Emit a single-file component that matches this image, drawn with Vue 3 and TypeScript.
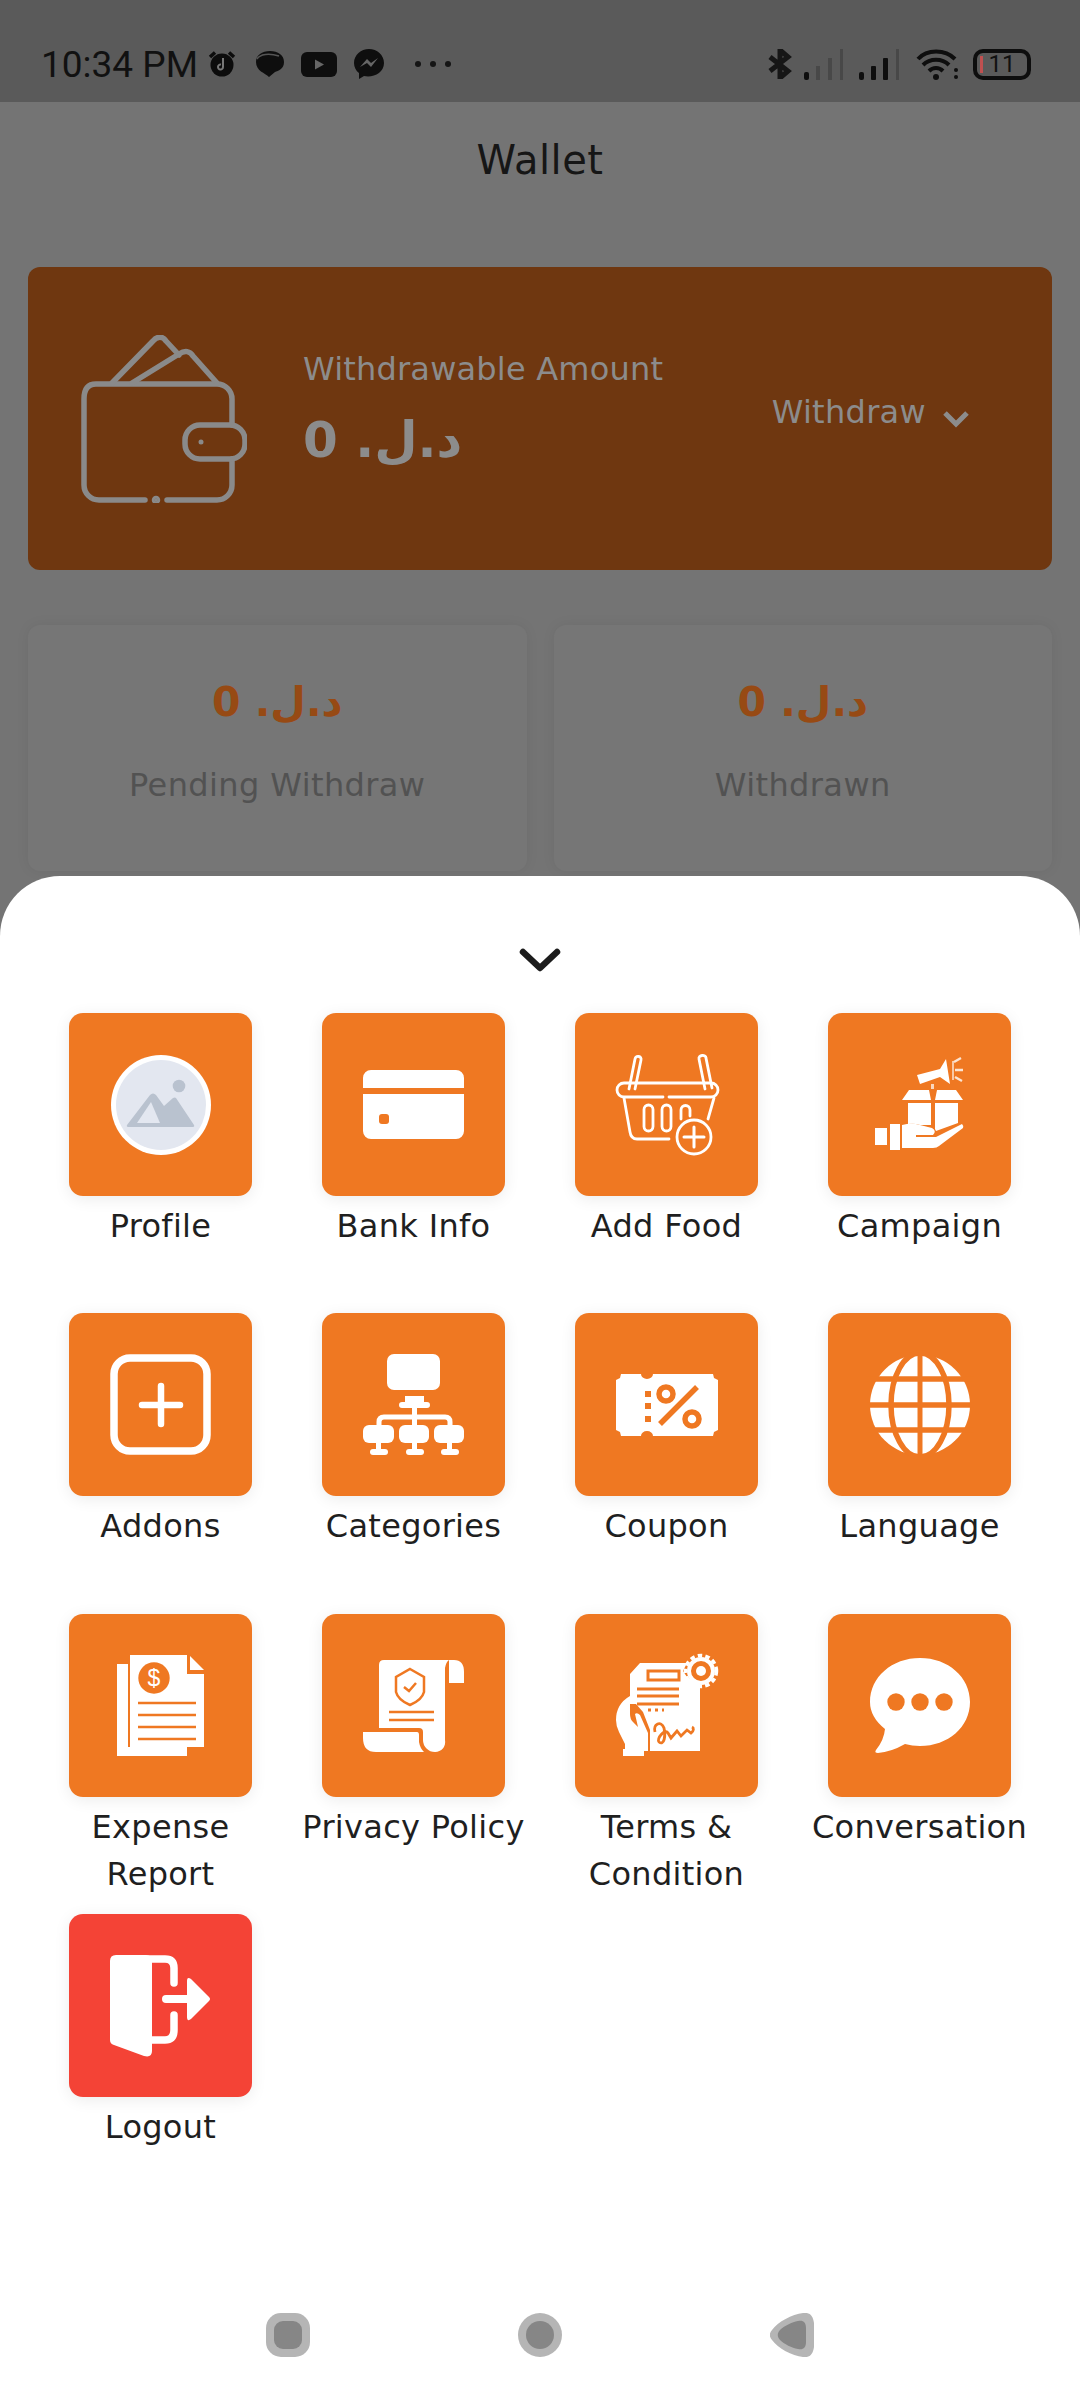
<script setup lang="ts">
interface Item { label: string; icon: string; red?: boolean }
const items: Item[] = [
  { label: 'Profile', icon: 'profile' },
  { label: 'Bank Info', icon: 'bank' },
  { label: 'Add Food', icon: 'food' },
  { label: 'Campaign', icon: 'campaign' },
  { label: 'Addons', icon: 'addons' },
  { label: 'Categories', icon: 'categories' },
  { label: 'Coupon', icon: 'coupon' },
  { label: 'Language', icon: 'language' },
  { label: 'Expense Report', icon: 'expense' },
  { label: 'Privacy Policy', icon: 'privacy' },
  { label: 'Terms & Condition', icon: 'terms' },
  { label: 'Conversation', icon: 'conversation' },
  { label: 'Logout', icon: 'logout', red: true },
]
const amount = 'د.ل. 0'
</script>

<template>
  <div class="screen">
    <header class="status">
      <span class="time">10:34 PM</span>
      <svg class="s-alarm" width="28" height="26" viewBox="0 0 28 26"><circle cx="14" cy="14" r="11.5" fill="#0c0c0c"/><path d="M2 6 7 1.5M26 6 21 1.5" stroke="#0c0c0c" stroke-width="3.5"/><path d="M15 7v9a2.5 2.5 0 1 1-2-2.4" stroke="#777" stroke-width="2" fill="none"/></svg>
      <svg class="s-chat" width="29" height="26" viewBox="0 0 29 26"><path d="M14 26C10 22 1 20 1 11 1 4 7 0 15 0s14 4 14 11-6 9-9 10z" fill="#0e0e0e"/><path d="M2 8C5 3 14 2 24 5" stroke="#555" stroke-width="1.5" fill="none"/></svg>
      <svg class="s-yt" width="36" height="25" viewBox="0 0 36 25"><rect width="36" height="25" rx="6" fill="#0e0e0e"/><path d="M14 7.5 23 12.5 14 17.5z" fill="#666"/></svg>
      <svg class="s-ms" width="30" height="30" viewBox="0 0 30 30"><path d="M15 0C7 0 0 6 0 14c0 4 2 8 5 10v6l5-3c9 2 20-3 20-13C30 6 23 0 15 0z" fill="#0e0e0e"/><path d="M6 18 13 10l4 4 7-5-7 9-4-4z" fill="#666"/></svg>
      <span class="dots"><i></i><i></i><i></i></span>
      <svg class="s-bt" width="24" height="30" viewBox="0 0 24 30"><path d="M2 8 20 22 12 29V1l8 7L2 22" stroke="#161616" stroke-width="5" fill="none"/></svg>
      <svg class="s-sig1" width="41" height="31" viewBox="0 0 41 31"><rect x="0" y="23" width="5" height="8" rx="2" fill="#0e0e0e"/><rect x="12" y="17" width="4" height="14" fill="#484848"/><rect x="24" y="9" width="4" height="22" fill="#484848"/><rect x="36" y="0" width="3" height="31" fill="#484848"/></svg>
      <svg class="s-sig2" width="41" height="31" viewBox="0 0 41 31"><rect x="0" y="23" width="5" height="8" rx="2" fill="#0e0e0e"/><rect x="12" y="17" width="5" height="14" rx="1" fill="#0e0e0e"/><rect x="24" y="9" width="5" height="22" rx="1" fill="#0e0e0e"/><rect x="37" y="0" width="3" height="31" fill="#484848"/></svg>
      <svg class="s-wifi" width="43" height="31" viewBox="0 0 43 31"><g fill="none" stroke="#0e0e0e" stroke-width="4"><path d="M2 10C11 0 29 0 39 10"/><path d="M7 16C14 9 26 9 33 16"/><path d="M13 22C17 18 23 18 27 22"/></g><circle cx="20" cy="28" r="3" fill="#0e0e0e"/><circle cx="40" cy="28" r="2" fill="#0e0e0e"/><circle cx="40" cy="21" r="2" fill="#0e0e0e"/></svg>
      <span class="battery"><i class="low"></i><b>11</b></span>
    </header>

    <div class="appbar">Wallet</div>

    <section class="wallet">
      <svg class="wallet-icon" width="166" height="168" viewBox="0 0 166 168" fill="none" stroke="#8a8a8a" stroke-width="5.500" stroke-linecap="round" stroke-linejoin="round">
        <path d="M86 165H136a15 15 0 0 0 15-15V124M151 90V64a15 15 0 0 0-15-15H15Q3 49 3 64V150a15 15 0 0 0 15 15H64"/>
        <path d="M31 48 72 6c4-5 10-5 13 0l13 14M51 48 98 19c6-4 11-3 14 2l24 27"/>
        <rect x="104" y="90" width="60" height="34" rx="15"/>
        <circle cx="120" cy="107" r="2.500" fill="#8a8a8a" stroke="none"/>
        <circle cx="75" cy="165" r="1.500" fill="#8a8a8a"/>
      </svg>
      <div class="wallet-text">
        <div class="wallet-label">Withdrawable Amount</div>
        <div class="wallet-amount">{{ amount }}</div>
      </div>
      <div class="withdraw">
        <span>Withdraw</span>
        <svg class="withdraw-chev" width="28" height="18" viewBox="0 0 28 18"><path d="M3 3 14 14 25 3" fill="none" stroke="#8c8c8c" stroke-width="5"/></svg>
      </div>
    </section>

    <section class="stats">
      <div class="stat"><div class="stat-amount">{{ amount }}</div><div class="stat-label">Pending Withdraw</div></div>
      <div class="stat"><div class="stat-amount">{{ amount }}</div><div class="stat-label">Withdrawn</div></div>
    </section>

    <section class="sheet">
      <svg class="collapse" width="42" height="26" viewBox="0 0 42 26"><path d="M4 5 21 21 38 5" fill="none" stroke="#1c1c1c" stroke-width="6.500" stroke-linecap="round" stroke-linejoin="round"/></svg>
      <div class="grid">
        <div v-for="item in items" :key="item.label" class="cell">
          <div class="tile" :class="{ red: item.red }">
            <svg width="183" height="183" viewBox="0 0 183 183">
              <g v-if="item.icon === 'profile'">
                <circle cx="92" cy="92" r="50" fill="#fff"/><circle cx="92" cy="92" r="45" fill="#e3e7f0"/><circle cx="110" cy="73" r="6.300" fill="#b9c2cf"/>
                <path d="M58 112 81 82q3-3 6 0l8 11 9-8q2-1 3 0l18 27q1 2-2 2H60q-3 0-2-2z" fill="#b9c2cf"/><path d="M68 110 82 89 91 110z" fill="#e3e7f0"/>
              </g>
              <g v-else-if="item.icon === 'bank'">
                <path d="M41 75V65a8 8 0 0 1 8-8h85a8 8 0 0 1 8 8v10zM41 81h101v37a8 8 0 0 1-8 8H49a8 8 0 0 1-8-8z" fill="#fff"/><rect x="57" y="101" width="10" height="10" rx="3" fill="#ef7822"/>
              </g>
              <g v-else-if="item.icon === 'food'" fill="none" stroke="#fff" stroke-width="2.800" stroke-linecap="round">
                <path d="M88 84H49a6.500 6.500 0 0 1 0-14H136a6.500 6.500 0 0 1 0 14H94"/>
                <path d="M54 76 60 46c1-4 7-3 6 1L60 76M124 46c-1-4 7-5 7-1l6 30M124 46l6 30"/>
                <path d="M49 85 55 119q1 7 7 7H94M139 85 133 106"/>
                <rect x="69" y="92" width="9" height="26" rx="4.500"/><rect x="87" y="92" width="9" height="26" rx="4.500"/><path d="M106 106V97a4.500 4.500 0 0 1 9 0v6"/>
                <circle cx="119" cy="124" r="17"/><path d="M109 124H129M119 114V134" stroke-width="3"/>
              </g>
              <g v-else-if="item.icon === 'campaign'" fill="#fff">
                <path d="M89 62 112 56 118 46 122 71 112 64 92 71z"/><path d="M124 48h2v19h-2z" opacity=".6"/><path d="M126 49l7-4M127 57h8M127 64l7 4" stroke="#fff" stroke-width="2.400" opacity=".8"/>
                <path d="M103 71h3v5h-3z" opacity=".7"/>
                <path d="M74 87 81 77H101L103 87zM107 87 109 77H128L135 87z"/>
                <path d="M80 90H103V112H92q-6-2-12-1zM107 90H130V110L108 118 107 116z"/>
                <rect x="47" y="115" width="12" height="17"/>
                <rect x="62" y="111" width="10" height="26"/>
                <path d="M74 112q10-3 18 0l12 3q5 3 1 7H88v2h20l26-13q2 2 1 4l-24 18q-2 2-6 2H74z"/>
              </g>
              <g v-else-if="item.icon === 'addons'" fill="none" stroke="#fff" stroke-linecap="round">
                <rect x="45" y="45" width="93" height="93" rx="16" stroke-width="7.500"/><path d="M73 92H111M92 73V111" stroke-width="6.500"/>
              </g>
              <g v-else-if="item.icon === 'categories'">
                <rect x="65" y="41" width="53" height="36" rx="7" fill="#fff"/>
                <path d="M83 83H102V89H83zM77 92a3 3 0 0 1 3-3h25a3 3 0 0 1 0 6H80a3 3 0 0 1-3-3z" fill="#fff"/>
                <path d="M92.500 95V112M57 112V109q0-5 5-5h61q5 0 5 5v3" fill="none" stroke="#fff" stroke-width="5"/>
                <g fill="#fff"><rect x="41" y="112" width="31" height="18" rx="6"/><rect x="77" y="112" width="30" height="18" rx="6"/><rect x="112" y="112" width="30" height="18" rx="6"/>
                <rect x="54" y="130" width="5" height="8"/><rect x="90" y="130" width="5" height="8"/><rect x="125" y="130" width="5" height="8"/>
                <rect x="48" y="136" width="18" height="6" rx="3"/><rect x="84" y="136" width="18" height="6" rx="3"/><rect x="119" y="136" width="18" height="6" rx="3"/></g>
              </g>
              <g v-else-if="item.icon === 'coupon'">
                <path d="M46 61H66a6 5 0 0 0 12 0H138l1 4 4 2V117l-4 2-1 4H78a6 5 0 0 0-12 0H46l-1-4-4-2V67l4-2z" fill="#fff"/>
                <g fill="#ef7822"><rect x="70" y="78" width="6" height="6"/><rect x="70" y="90" width="6" height="6"/><rect x="70" y="103" width="6" height="6"/></g>
                <g fill="none" stroke="#ef7822" stroke-width="5.500"><circle cx="91" cy="81" r="7"/><circle cx="117" cy="106" r="7"/><path d="M122 74 85 111"/></g>
              </g>
              <g v-else-if="item.icon === 'language'">
                <circle cx="92" cy="92" r="50" fill="#fff"/>
                <g fill="none" stroke="#ef7822"><ellipse cx="92" cy="92" rx="29" ry="52" stroke-width="5.500"/><path d="M92 38V146" stroke-width="5"/><path d="M38 92H146M38 66H146M38 117H146" stroke-width="5.500"/></g>
              </g>
              <g v-else-if="item.icon === 'expense'">
                <path d="M48 50H59V133H118V142H48z" fill="#fff"/>
                <path d="M61 41H118V60H135V133H61z" fill="#fff"/><path d="M121 42 135 56H121z" fill="#fff"/>
                <circle cx="85" cy="64" r="15.700" fill="#ef7822"/>
                <text x="85" y="72" fill="#fff" font-family="'Liberation Sans', sans-serif" font-size="23" text-anchor="middle">$</text>
                <path d="M69 89H127M69 101H127M69 113H127M69 125H127" stroke="#ef7822" stroke-width="2.400"/>
              </g>
              <g v-else-if="item.icon === 'privacy'">
                <path d="M62 46H127q-3 2-4 8V126a10 10 0 0 1-10 12 12 12 0 0 1-12-12V118q0-4-4-4H57V51q0-5 5-5z" fill="#fff"/>
                <path d="M127 46h5q10 0 10 12V69H127z" fill="#fff"/>
                <path d="M41 118H95q2 0 2 3V128q1 6 5 10H54q-13 0-13-14z" fill="#fff"/>
                <path d="M88 55 102 63V78Q100 86 88 91 76 86 74 78V63z" fill="none" stroke="#ef7822" stroke-width="2.500"/>
                <path d="M82 73 87 77 94 69" fill="none" stroke="#ef7822" stroke-width="2.500"/>
                <path d="M67 98H112M67 106H112" stroke="#ef7822" stroke-width="2.400"/>
              </g>
              <g v-else-if="item.icon === 'terms'">
                <path d="M65 49H112L108 57l4 6 6 4h7v70H75V116L68 98l-7-8H55V60z" fill="#fff"/>
                <path d="M73 57H104V66H73z" fill="none" stroke="#ef7822" stroke-width="3"/>
                <path d="M62 75H104M62 82H104M62 90H104" fill="none" stroke="#ef7822" stroke-width="3"/>
                <path d="M73 96H89" stroke="#ef7822" stroke-width="3" stroke-dasharray="3 4"/>
                <path d="M80 118c-2-8 6-12 9-4 2 8 0 18-5 14-3-3 6-14 9-9l3 5 6-7 4 5 6-6 4 3c3-2 3-5 1-6" fill="none" stroke="#ef7822" stroke-width="2.800"/>
                <path d="M55 82V100q0 5 3 8l5 5-3-13q2-2 5 1l8 18v18H50v-7L44 118q-3-6-3-12 0-16 14-24z" fill="#fff"/>
                <rect x="48" y="135" width="21" height="7" fill="#fff"/>
                <g fill="none" stroke="#fff"><circle cx="126" cy="57" r="12" stroke-width="4"/><circle cx="126" cy="57" r="15.500" stroke-width="3.500" stroke-dasharray="4.500 3.200"/></g><circle cx="126" cy="57" r="5" fill="#fff"/>
              </g>
              <g v-else-if="item.icon === 'conversation'">
                <path d="M92 44c28 0 50 19 50 44s-22 44-50 44q-8 0-15-2-14 8-27 9-4 0-2-3 8-10 9-21-15-12-15-27c0-25 22-44 50-44z" fill="#fff"/>
                <circle cx="68" cy="88" r="8.700" fill="#ef7822"/><circle cx="92" cy="88" r="8.700" fill="#ef7822"/><circle cx="116" cy="88" r="8.700" fill="#ef7822"/>
              </g>
              <g v-else>
                <path d="M47 41H77q6 0 6 6V137q0 7-8 5L45 131q-4-1-4-5V47q0-6 6-6z" fill="#fff"/>
                <path d="M78 45H96q9 0 9 9V69M105 101V116q0 10-9 10H83" fill="none" stroke="#fff" stroke-width="7.500" stroke-linecap="round"/>
                <path d="M97 85H120" stroke="#fff" stroke-width="8" stroke-linecap="round"/>
                <path d="M118 67q0-5 4-2l18 18q2 2 0 4l-18 18q-4 3-4-2z" fill="#fff"/>
              </g>
            </svg>
          </div>
          <div class="label">{{ item.label }}</div>
        </div>
      </div>
      <nav class="nav">
        <svg width="44" height="44" viewBox="0 0 44 44"><rect width="44" height="44" rx="15" fill="#b5b5b5"/><rect x="8" y="8" width="28" height="28" rx="9" fill="#868686"/></svg>
        <svg width="44" height="44" viewBox="0 0 44 44"><circle cx="22" cy="22" r="22" fill="#b5b5b5"/><circle cx="22" cy="22" r="14" fill="#868686"/></svg>
        <svg width="44" height="44" viewBox="0 0 44 44"><path d="M2 17C8 9 22 1 33 0c7-1 10 3 11 10v24c-1 7-4 11-11 10C22 43 8 35 2 27c-3-4-3-6 0-10z" fill="#b5b5b5"/><path d="M10 17c4-4 12-8 18-9 5-1 8 1 8 7v14c0 6-3 8-8 7-6-1-14-5-18-9-3-3-3-7 0-10z" fill="#868686"/></svg>
      </nav>
    </section>
  </div>
</template>

<style scoped>
.screen {
  width: 1080px;
  height: 2400px;
  display: flex;
  flex-direction: column;
  background: #747474;
  font-family: "DejaVu Sans", sans-serif;
  overflow: hidden;
}
.status {
  height: 102px;
  flex: none;
  box-sizing: border-box;
  padding: 26px 49px 0 41px;
  background: #5a5a5a;
  display: flex;
  align-items: center;
}
.time {
  font: 37px Roboto, sans-serif;
  color: #111;
  width: 167px;
}
.s-chat { margin-left: 19px; }
.s-yt { margin-left: 17px; }
.s-ms { margin-left: 17px; }
.dots { display: flex; gap: 9px; margin-left: 31px; }
.dots i { width: 6px; height: 6px; border-radius: 50%; background: #151515; }
.s-bt { margin-left: auto; }
.s-sig1 { margin-left: 12px; }
.s-sig2 { margin-left: 14px; }
.s-wifi { margin-left: 16px; }
.battery {
  margin-left: 14px;
  width: 58px;
  height: 31px;
  box-sizing: border-box;
  border: 4px solid #0e0e0e;
  border-radius: 10px;
  display: flex;
  align-items: center;
  justify-content: center;
  position: relative;
  color: #111;
}
.battery b { font: 24px Roboto, sans-serif; }
.battery .low { position: absolute; left: 3px; top: 3px; bottom: 3px; width: 3px; background: #c05050; }
.appbar {
  height: 116px;
  flex: none;
  display: flex;
  align-items: center;
  justify-content: center;
  font-size: 40px;
  letter-spacing: .5px;
  color: #161616;
}
.wallet {
  margin: 49px 28px 0;
  height: 303px;
  flex: none;
  border-radius: 12px;
  background: #6f3710;
  display: flex;
  align-items: center;
  padding: 0 82px 0 53px;
  color: #8c8c8c;
}
.wallet-icon { flex: none; }
.wallet-text { margin-left: 56px; margin-bottom: 23px; }
.wallet-label { font-size: 32px; line-height: 50px; letter-spacing: .2px; }
.wallet-amount { font-size: 50px; font-weight: 700; line-height: 62px; margin-top: 15px; }
.withdraw { margin-left: auto; display: flex; align-items: center; gap: 16px; font-size: 32px; letter-spacing: .3px; margin-bottom: 14px; }
.withdraw-chev { margin-top: 14px; }
.stats {
  margin: 55px 28px 0;
  height: 246px;
  flex: none;
  display: flex;
  gap: 27px;
}
.stat {
  flex: 1;
  background: #767676;
  border-radius: 12px;
  box-shadow: 0 0 14px rgba(0, 0, 0, .06);
  text-align: center;
  padding-top: 51px;
  box-sizing: border-box;
}
.stat-amount { font-size: 41px; font-weight: 700; color: #974a14; line-height: 52px; }
.stat-label { font-size: 32px; color: #525252; line-height: 48px; margin-top: 33px; letter-spacing: .4px; }
.sheet {
  margin-top: 5px;
  flex: 1;
  background: #fff;
  border-radius: 60px 60px 0 0;
  display: flex;
  flex-direction: column;
  position: relative;
}
.collapse { display: block; margin: 71px auto 0; flex: none; }
.grid {
  margin-top: 40px;
  padding: 0 34px;
  display: grid;
  grid-template-columns: repeat(4, 253px);
  grid-auto-rows: 300.33px;
  height: 1201px;
}
.cell { display: flex; flex-direction: column; align-items: center; }
.tile {
  width: 183px;
  height: 183px;
  flex: none;
  border-radius: 14px;
  background: #ef7822;
  box-shadow: 0 3px 16px rgba(0, 0, 0, .08);
}
.tile svg { display: block; }
.tile.red { background: #f44336; }
.label {
  margin-top: 7px;
  font-size: 32px;
  line-height: 47px;
  color: #1f1f1f;
  text-align: center;
  letter-spacing: .3px;
  width: 230px;
}
.nav {
  margin-top: auto;
  padding-bottom: 43px;
  display: flex;
  justify-content: center;
  gap: 208px;
}
</style>
